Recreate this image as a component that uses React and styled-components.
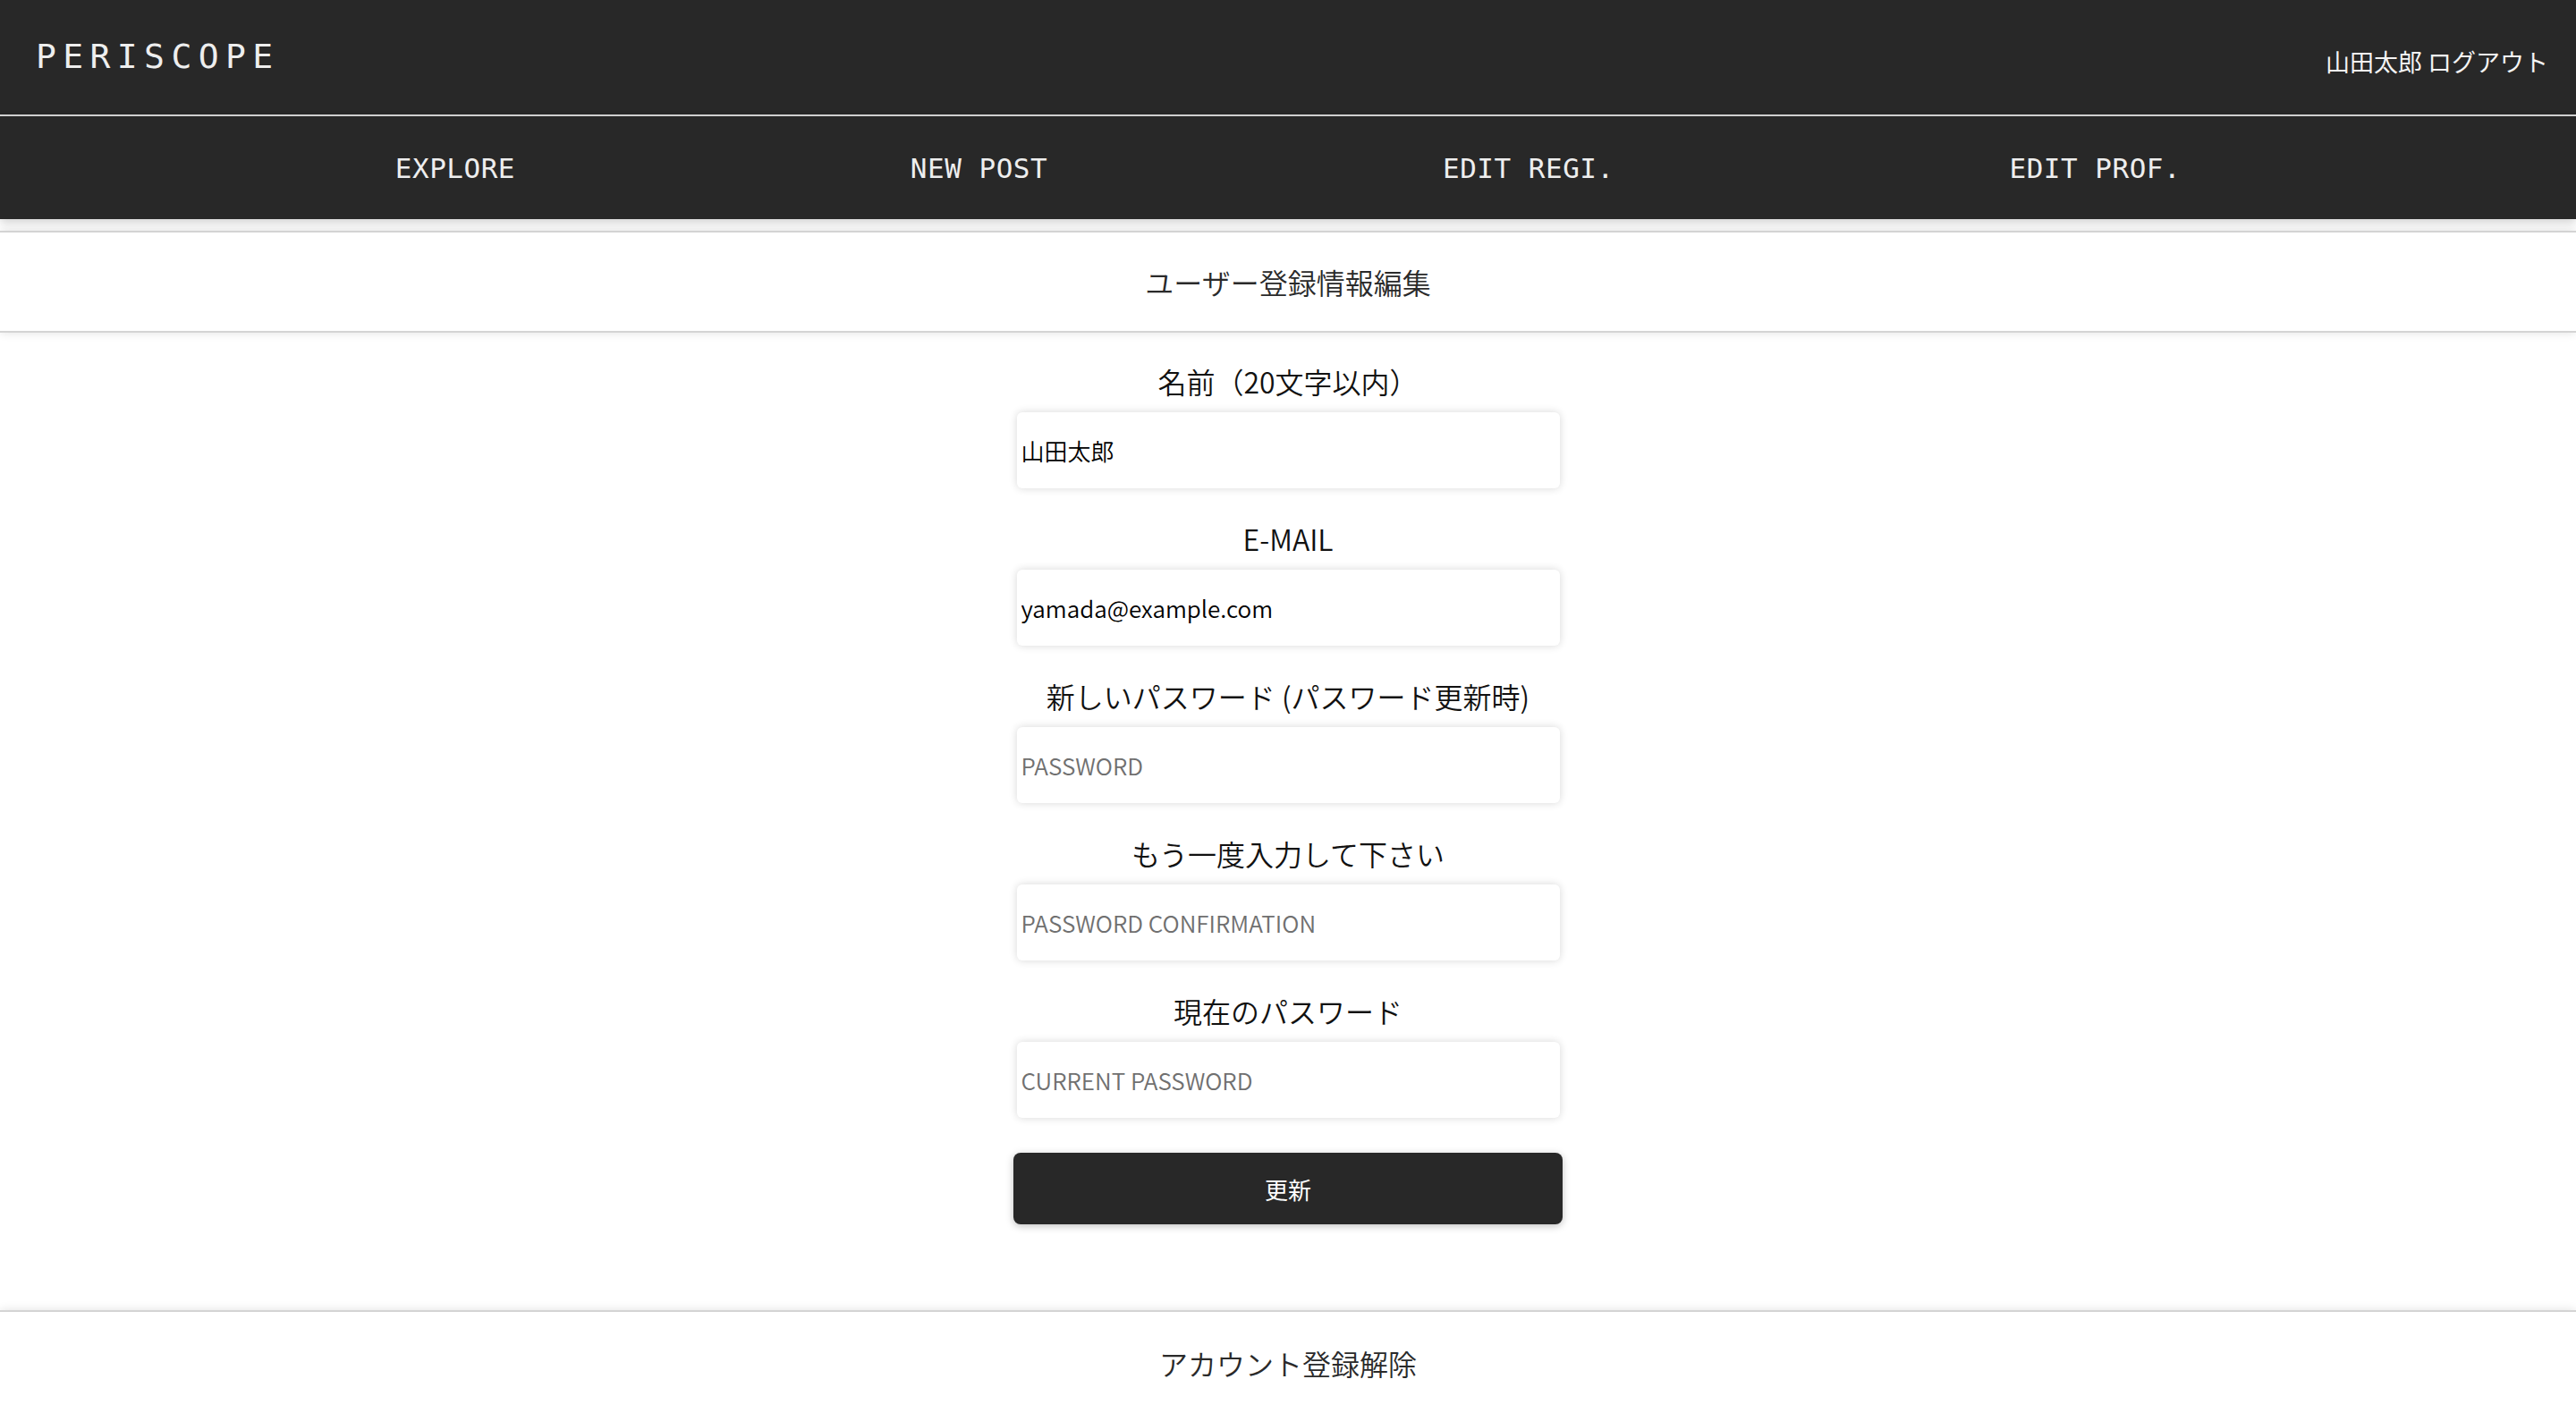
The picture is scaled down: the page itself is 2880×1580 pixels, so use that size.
import React from 'react'
import styled, { createGlobalStyle } from 'styled-components'

const GlobalStyle = createGlobalStyle`
  body {
    margin: 0;
    background: #fff;
    font-family: "Noto Sans CJK JP", "Noto Sans", sans-serif;
    color: #222;
  }
`

const Header = styled.header`
  align-items: center;
  background: #282828;
  border-bottom: 2px solid #d6d6d6;
  box-sizing: border-box;
  display: flex;
  height: 130px;
  justify-content: space-between;
  padding: 0 31px 2px 40px;
`

const Logo = styled.div`
  color: #eee;
  font-family: "DejaVu Sans Mono", "Liberation Mono", monospace;
  font-size: 38px;
  letter-spacing: 7.4px;
`

const User = styled.div`
  color: #f4f4f4;
  font-size: 27px;
  font-weight: 400;
  margin-top: 10px;
  white-space: pre;
`

const Nav = styled.nav`
  align-items: center;
  background: #282828;
  box-shadow: 0 4px 10px rgba(0, 0, 0, 0.18);
  display: flex;
  height: 115px;
  justify-content: space-evenly;
  position: relative;
`

const NavLink = styled.a`
  color: #eee;
  font-family: "DejaVu Sans Mono", "Liberation Mono", monospace;
  font-size: 31px;
  letter-spacing: 0.5px;
  text-decoration: none;
`

const Card = styled.section`
  align-items: center;
  background: #fff;
  border-bottom: ${props => (props.bottom ? '0' : '2px solid #d4d4d4')};
  border-top: 2px solid #d4d4d4;
  box-shadow: 0 0 10px rgba(0, 0, 0, 0.12);
  box-sizing: border-box;
  color: #2a2a2a;
  display: flex;
  font-size: 32px;
  font-weight: 350;
  height: ${props => props.height}px;
  justify-content: center;
  margin-top: ${props => props.top}px;
`

const Form = styled.form`
  align-items: center;
  display: flex;
  flex-direction: column;
  gap: 34px;
  padding-top: 32px;
`

const Field = styled.div`
  align-items: center;
  display: flex;
  flex-direction: column;
  gap: 13px;
`

const Label = styled.label`
  color: #111;
  font-size: 32px;
  font-weight: 350;
  height: 44px;
  line-height: 44px;
`

const Input = styled.input`
  background: #fff;
  border: none;
  border-radius: 6px;
  box-shadow: 0 0 10px rgba(0, 0, 0, 0.16);
  box-sizing: border-box;
  color: #000;
  font-family: "Noto Sans CJK JP", "Noto Sans", sans-serif;
  font-size: 26px;
  font-weight: 350;
  height: 85px;
  outline: none;
  padding: 0 5px;
  width: 607px;

  &::placeholder {
    color: #707070;
  }
`

const Button = styled.button`
  background: #282828;
  border: none;
  border-radius: 8px;
  box-shadow: 0 2px 9px rgba(0, 0, 0, 0.25);
  color: #fff;
  font-family: "Noto Sans CJK JP", "Noto Sans", sans-serif;
  font-size: 26px;
  font-weight: 400;
  height: 80px;
  margin-top: 5px;
  width: 614px;
`

const fields = [
  { label: '名前（20文字以内）', value: '山田太郎' },
  { label: 'E-MAIL', value: 'yamada@example.com' },
  { label: '新しいパスワード (パスワード更新時)', placeholder: 'PASSWORD', type: 'password' },
  { label: 'もう一度入力して下さい', placeholder: 'PASSWORD CONFIRMATION', type: 'password' },
  { label: '現在のパスワード', placeholder: 'CURRENT PASSWORD', type: 'password' }
]

export default function App () {
  return (
    <>
      <GlobalStyle />
      <Header>
        <Logo>PERISCOPE</Logo>
        <User>山田太郎 ログアウト</User>
      </Header>
      <Nav>
        <NavLink href='#'>EXPLORE</NavLink>
        <NavLink href='#'>NEW POST</NavLink>
        <NavLink href='#'>EDIT REGI.</NavLink>
        <NavLink href='#'>EDIT PROF.</NavLink>
      </Nav>
      <Card top={13} height={114}>ユーザー登録情報編集</Card>
      <Form onSubmit={e => e.preventDefault()}>
        {fields.map(f => (
          <Field key={f.label}>
            <Label>{f.label}</Label>
            <Input
              type={f.type || 'text'}
              defaultValue={f.value}
              placeholder={f.placeholder}
            />
          </Field>
        ))}
        <Button type='submit'>更新</Button>
      </Form>
      <Card top={96} height={116} bottom>アカウント登録解除</Card>
    </>
  )
}
